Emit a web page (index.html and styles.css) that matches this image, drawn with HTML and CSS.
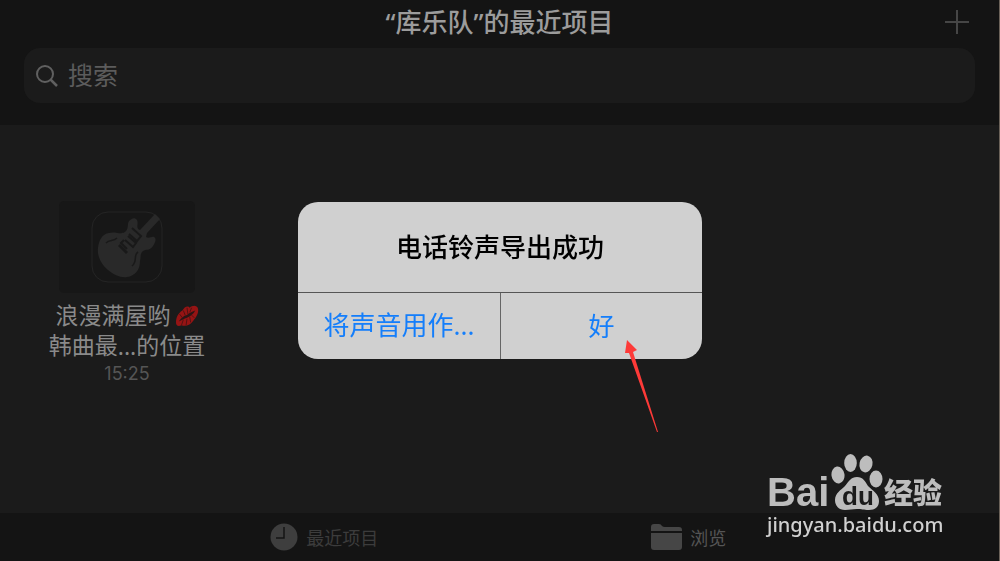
FILE: index.html
```html
<!DOCTYPE html>
<html lang="zh-CN">
<head>
  <meta charset="UTF-8">
  <meta name="viewport" content="width=device-width, initial-scale=1.0">
  <title>最近项目</title>
  <link rel="stylesheet" href="styles.css">
</head>
<body>
  <header class="header">
    <div class="title-bar">
      <h1>“库乐队”的最近项目</h1>
      <button class="add-button" aria-label="添加">
        <svg width="24" height="24" viewBox="0 0 24 24" stroke="#464646" stroke-width="2">
          <path d="M12 0v24M0 12h24"/>
        </svg>
      </button>
    </div>
    <label class="search">
      <svg width="22" height="22" viewBox="0 0 22 22" fill="none" stroke="#606060" stroke-width="2">
        <circle cx="9" cy="9" r="8"/>
        <path d="M14.5 14.5L21 21" stroke-width="2.5"/>
      </svg>
      <input type="search" placeholder="搜索" aria-label="搜索">
    </label>
  </header>

  <main class="files">
    <article class="file">
      <div class="thumb">
        <svg width="72" height="72" viewBox="0 0 72 72">
          <rect x="1" y="1" width="70" height="70" rx="16" fill="none" stroke="#252525"/>
          <path fill="#292929" d="M64 3L69 8L56 22L55 26C58 28 61 25 63 26C66 28 64 32 62 35C59 40 55 38 52 40C49 42 50 46 49 50C49 59 44 65 36 66C30 67 23 64 17 59C10 53 6 45 7 37C8 29 11 23 18 22C24 20 30 24 34 21C38 18 36 13 38 10C41 7 44 6 46 9C48 13 44 17 49 19Z"/>
          <path fill="none" stroke="#191919" stroke-width="2" d="M41 17l9 8l-4 5l-8-7M37 25l8 7l-3 4l-8-7M33 29l-3 3l6 6"/>
          <path fill="none" stroke="#191919" stroke-width="3" d="M28 34l8 8"/>
          <path fill="none" stroke="#191919" stroke-width="1.5" d="M15 32c4-4 7-1 11-5M47 41c-5 3 0 9-6 14"/>
        </svg>
      </div>
      <h2 class="file-name">
        <span>浪漫满屋哟</span>
        <svg width="24" height="22" viewBox="0 0 26 24" role="img" aria-label="吻">
          <path fill="#961414" d="M1 19C1 14 3 9 8 6C10 2 14 0 16 3C19 0 24 0 25 4C26 9 23 13 20 17C17 22 11 24 7 22C3 24 1 22 1 19Z"/>
          <path fill="#2b1515" d="M4 18C7 14 9 12 13 11C16 8 18 8 22 6C20 10 17 12 13 14C10 15 7 17 4 18Z"/>
          <path fill="none" stroke="#4c1111" d="M9 6l2 5M13 3l1 7M18 3l-2 5M7 22l2-6M12 22l1-7M17 19l-1-6M21 14l-3-3M5 10l3 4"/>
        </svg>
      </h2>
      <p class="file-name">韩曲最<i>...</i>的位置</p>
      <time class="file-time">15:25</time>
    </article>
  </main>

  <nav class="tabs">
    <a class="tab" href="#recent">
      <svg width="28" height="28" viewBox="0 0 28 28">
        <circle cx="14" cy="14" r="13.5" fill="#3e3e3e"/>
        <path d="M14 4v11H6" fill="none" stroke="#141414" stroke-width="1.5"/>
      </svg>
      <span>最近项目</span>
    </a>
    <a class="tab browse" href="#browse">
      <svg width="31" height="28" viewBox="0 0 31 28" fill="#464646">
        <path d="M0 8V4Q0 1 3 1H8Q10 1 11 3Q12 4 14 4H28Q31 4 31 7V8Z"/>
        <path d="M0 10H31V24Q31 27 28 27H3Q0 27 0 24Z"/>
      </svg>
      <span>浏览</span>
    </a>
  </nav>

  <div class="overlay">
    <section class="alert" role="alertdialog" aria-labelledby="alert-title">
      <h2 id="alert-title">电话铃声导出成功</h2>
      <div class="alert-actions">
        <button>将声音用作<i>...</i></button>
        <button>好</button>
      </div>
    </section>
  </div>

  <svg class="arrow" width="34" height="94" viewBox="0 0 34 94">
    <path fill="#fd3a38" d="M2 1L12 11L8 13L33 93L32 93L4 14L0 14Z"/>
  </svg>

  <div class="watermark">
    <div class="brand">
      <span class="brand-bai">Bai</span>
      <svg width="52" height="58" viewBox="0 0 52 58">
        <g fill="#bdbdbd">
          <ellipse cx="7" cy="22" rx="6.5" ry="8.5" transform="rotate(-8 7 22)"/>
          <ellipse cx="19.500" cy="10" rx="6.300" ry="9"/>
          <ellipse cx="35" cy="11" rx="6.500" ry="8.500" transform="rotate(12 35 11)"/>
          <ellipse cx="45" cy="26" rx="6.500" ry="8.500"/>
          <path d="M26 24C32 24 34 28 37 33C42 38 48 41 48 48C48 54 44 57 38 57C32 57 31 56 26 56C21 56 19 57 14 57C8 57 4 53 4 47C4 40 10 37 14 33C18 28 20 24 26 24Z"/>
        </g>
        <text class="brand-du" x="27" y="52" text-anchor="middle">du</text>
      </svg>
      <span class="brand-exp">经验</span>
    </div>
    <a class="brand-url" href="#jingyan">jingyan.baidu.com</a>
  </div>

  <script>
    const input = document.querySelector('.search input');
    const file = document.querySelector('.file');

    // Фильтр по имени файла
    input.addEventListener('input', () => {
      file.hidden = !file.innerText.includes(input.value.trim());
    });

    // Закрыть окно
    document.querySelectorAll('.alert button').forEach(button => {
      button.addEventListener('click', () => {
        document.querySelector('.overlay').hidden = true;
      });
    });
  </script>
</body>
</html>
```
FILE: styles.css
```css
* {
  box-sizing: border-box;
}
[hidden] {
  display: none !important;
}
body {
  margin: 0;
  min-height: 100vh;
  display: flex;
  flex-direction: column;
  font-family: Inter, "Noto Sans CJK SC", sans-serif;
  background-color: #1b1b1b;
  border-right: 1px solid #6b6259;
}
h1, h2, p {
  margin: 0;
}
i {
  font-family: "Noto Sans", sans-serif;
  font-style: normal;
}
button {
  padding: 0;
  border: none;
  background: none;
  font-family: inherit;
  cursor: pointer;
}
svg {
  display: block;
  flex-shrink: 0;
}
.header {
  padding: 0 24px 22px;
  background-color: #141414;
}
.title-bar {
  display: grid;
  grid-template-columns: 1fr auto 1fr;
  align-items: center;
  height: 44px;
  margin-bottom: 4px;
}
.title-bar h1 {
  grid-column: 2;
  color: #9c9c9c;
  font-family: "Noto Sans", "Noto Sans CJK SC", sans-serif;
  font-size: 26px;
  line-height: 36px;
  font-weight: 500;
}
.add-button {
  justify-self: end;
  padding-right: 6px;
}
.search {
  display: flex;
  align-items: center;
  gap: 10px;
  height: 55px;
  padding: 0 12px;
  border-radius: 16px;
  background-color: #1b1b1b;
}
.search input {
  flex: 1;
  min-width: 0;
  padding: 0;
  border: none;
  outline: none;
  background: none;
  color: #9c9c9c;
  font-family: inherit;
  font-size: 25px;
}
.search input::placeholder {
  color: #5c5c5c;
}
.files {
  flex: 1;
  padding: 76px 24px 20px;
}
.file {
  width: 206px;
  display: flex;
  flex-direction: column;
  align-items: center;
}
.thumb {
  display: flex;
  align-items: center;
  justify-content: center;
  width: 136px;
  height: 92px;
  margin-bottom: 8px;
  border-radius: 5px;
  background-color: #171717;
}
.file-name {
  display: flex;
  align-items: center;
  gap: 4px;
  color: #8a8a8a;
  font-size: 23px;
  line-height: 30px;
  font-weight: 400;
}
p.file-name {
  gap: 0;
}
.file-time {
  color: #555;
  font-size: 18px;
  line-height: 26px;
}
.tabs {
  display: grid;
  grid-template-columns: 1fr 1fr;
  height: 48px;
  padding: 0 13% 0 14%;
  background-color: #141414;
}
.tab {
  display: flex;
  align-items: center;
  justify-content: center;
  gap: 8px;
  padding-left: 4px;
  color: #3c3c3c;
  font-size: 18px;
  text-decoration: none;
}
.browse {
  color: #555;
}
.overlay {
  position: fixed;
  inset: 0;
  display: flex;
  align-items: center;
  justify-content: center;
}
.alert {
  width: 404px;
  border-radius: 20px;
  background-color: #d0d0d0;
  overflow: hidden;
}
.alert h2 {
  padding: 28px 16px 26px;
  color: #000;
  font-size: 26px;
  line-height: 36px;
  font-weight: 500;
  text-align: center;
}
.alert-actions {
  display: grid;
  grid-template-columns: 1fr 1fr;
  border-top: 1px solid #555;
}
.alert button {
  height: 66px;
  padding-bottom: 4px;
  color: #147efb;
  font-size: 26px;
}
.alert button + button {
  border-left: 1px solid #666;
}
.arrow {
  position: absolute;
  left: 625px;
  top: 339px;
}
.watermark {
  position: absolute;
  right: 58px;
  bottom: 22px;
  width: 175px;
  color: #bdbdbd;
}
.brand {
  display: flex;
  align-items: flex-end;
  justify-content: space-between;
}
.brand-bai {
  font-family: "Liberation Sans", sans-serif;
  font-size: 40px;
  line-height: 38px;
  font-weight: 700;
}
.brand-du {
  font-family: "Liberation Sans", sans-serif;
  font-size: 26px;
  font-weight: 700;
  fill: #1b1b1b;
}
.brand-exp {
  font-size: 29px;
  line-height: 34px;
  font-weight: 900;
}
.brand-url {
  display: block;
  color: #d0d0d0;
  font-family: "Noto Sans", sans-serif;
  font-size: 20px;
  line-height: 28px;
  font-weight: 500;
  text-decoration: none;
}
```
